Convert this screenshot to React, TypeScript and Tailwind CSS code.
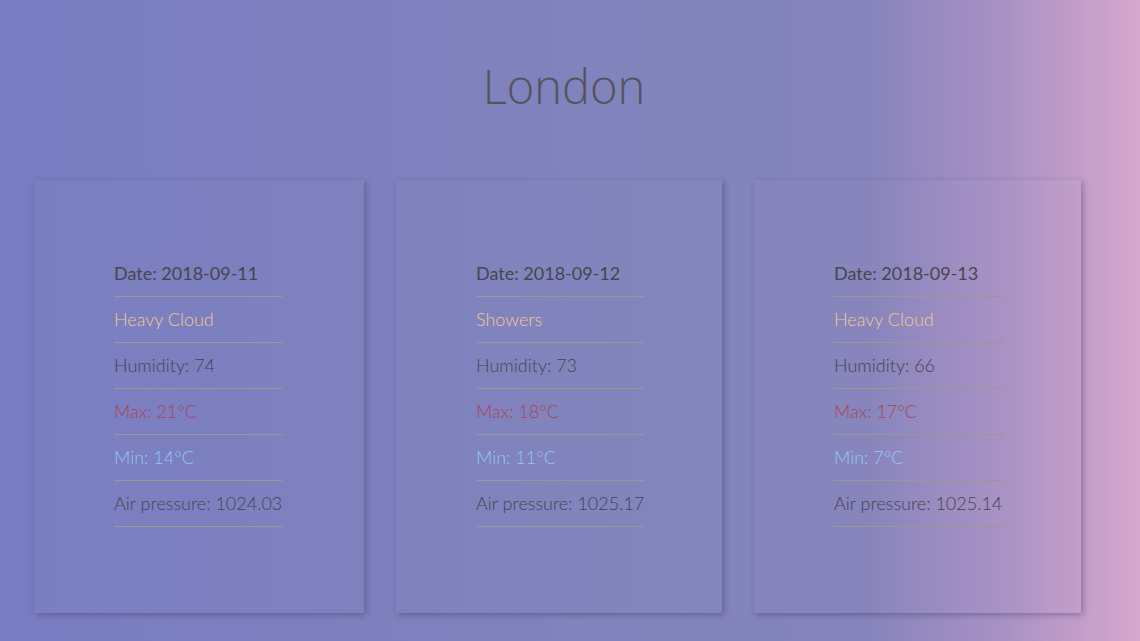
import React from "react";

type Day = {
  date: string;
  state: string;
  humidity: number;
  max: number;
  min: number;
  pressure: string;
  w: string;
};

const days: Day[] = [
  { date: "2018-09-11", state: "Heavy Cloud", humidity: 74, max: 21, min: 14, pressure: "1024.03", w: "w-[330px]" },
  { date: "2018-09-12", state: "Showers", humidity: 73, max: 18, min: 11, pressure: "1025.17", w: "w-[326px]" },
  { date: "2018-09-13", state: "Heavy Cloud", humidity: 66, max: 17, min: 7, pressure: "1025.14", w: "w-[327px]" },
];

const row = "pt-[10px] pb-[11px] leading-[24px] border-b border-[#9b998f] whitespace-nowrap";

function Card({ d }: { d: Day }) {
  return (
    <div className={`${d.w} h-[433px] pl-[80px] pt-[71px] shadow-[2px_2px_6px_rgba(40,40,80,0.35)] bg-[rgba(255,255,255,0.01)]`}>
      <ul className="inline-flex flex-col text-[18px] font-light">
        <li className={`${row} font-normal text-[#47464d]`}>Date: {d.date}</li>
        <li className={`${row} text-[#f6c88f]`}>{d.state}</li>
        <li className={`${row} text-[#45434f]`}>Humidity: {d.humidity}</li>
        <li className={`${row} text-[#aa4454]`}>Max: {d.max}°C</li>
        <li className={`${row} text-[#93c6f5]`}>Min: {d.min}°C</li>
        <li className={`${row} text-[#45434f]`}>Air pressure: {d.pressure}</li>
      </ul>
    </div>
  );
}

export default function App() {
  return (
    <div
      className="w-[1140px] h-[641px] overflow-hidden bg-[linear-gradient(to_right,#797cc1_0%,#8284bc_60%,#8684bc_76%,#a991c5_88%,#d7a7cd_100%)]"
      style={{ fontFamily: "Lato, 'Open Sans', sans-serif" }}
    >
      <h1
        className="pt-[54px] pr-[12px] h-[180px] text-center text-[47px] leading-[64px] font-light tracking-[0px] text-[#55545e]"
        style={{ fontFamily: "'Open Sans', sans-serif" }}
      >
        London
      </h1>
      <div className="flex gap-[32px] pl-[34px]">
        {days.map((d) => (
          <Card key={d.date} d={d} />
        ))}
      </div>
    </div>
  );
}
